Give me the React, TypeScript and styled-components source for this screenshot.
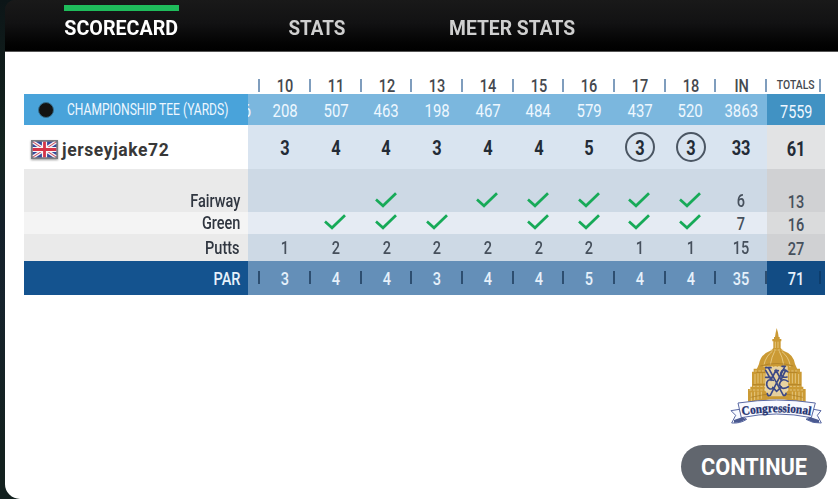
import React from "react"
import styled, { createGlobalStyle } from "styled-components"

const GlobalStyle = createGlobalStyle`
  * {
    box-sizing: border-box;
  }

  body {
    margin: 0;
    overflow: hidden;
    background: #14211f;
    font-family: Roboto, "Liberation Sans", sans-serif;
  }
`

const Screen = styled.div`
  height: 499px;
  padding-left: 5px;
  background: linear-gradient(#0c1517, #14241f 30%, #14202a 45%, #16232c 60%, #13211f 90%);
`

const Panel = styled.main`
  height: 499px;
  background: linear-gradient(#191919 51px, #fff 51px);
  border-radius: 10px 0 0 15px;
  overflow: hidden;
`

const Tabs = styled.nav`
  display: flex;
  height: 52px;
  padding: 5px 0 0 59px;
  background: linear-gradient(#191919, #121213 45%, #030303 85%, #000);
  border-bottom: 1px solid #555;
`

const Tab = styled.a<{ $active?: boolean; $width: number; $gap: number }>`
  width: ${(props) => props.$width}px;
  margin-right: ${(props) => props.$gap}px;
  height: 46px;
  border-top: 6px solid ${(props) => (props.$active ? "#1fbc5b" : "transparent")};
  color: ${(props) => (props.$active ? "#fff" : "#cfcfcf")};
  display: flex;
  justify-content: center;
  font-size: 20.5px;
  font-weight: 700;
  line-height: 34px;
  white-space: nowrap;
`

const Text = styled.span<{
  $squeeze?: number
  $nudge?: number
  $origin?: string
  $size?: number
}>`
  display: inline-block;
  flex: none;
  white-space: nowrap;
  ${(props) => props.$size && `font-size: ${props.$size}px;`}
  transform: translateY(${(props) => props.$nudge ?? 0}px)
    scaleX(${(props) => props.$squeeze ?? 0.83});
  transform-origin: ${(props) => props.$origin ?? "center"};
`

const Table = styled.section`
  width: 801px;
  margin: 26px 0 0 19px;
`

interface Tone {
  height: number
  label: string
  holes: string
  total: string
  color: string
  labelColor?: string
  size?: number
  weight?: number
  top?: number
}

const Row = styled.div<{ $tone: Tone }>`
  display: grid;
  grid-template-columns: 224px 519px 58px;
  grid-template-rows: 100%;
  height: ${(props) => props.$tone.height}px;
  color: ${(props) => props.$tone.color};
  font-size: ${(props) => props.$tone.size ?? 17.5}px;
  font-weight: ${(props) => props.$tone.weight ?? 500};
  line-height: 16px;

  > * {
    padding-top: ${(props) => props.$tone.top ?? 0}px;
  }
`

const Label = styled.div<{ $tone: Tone; $left?: boolean }>`
  display: flex;
  align-items: center;
  justify-content: ${(props) => (props.$left ? "flex-start" : "flex-end")};
  padding-right: 8px;
  background: ${(props) => props.$tone.label};
  color: ${(props) => props.$tone.labelColor ?? props.$tone.color};
`

const Holes = styled.div<{ $tone: Tone }>`
  display: grid;
  grid-template-columns: 10.3px repeat(10, 50.7px) 1.7px;
  background: ${(props) => props.$tone.holes};
`

const Total = styled.div<{ $tone: Tone }>`
  display: flex;
  align-items: center;
  justify-content: center;
  background: ${(props) => props.$tone.total};
`

const Cell = styled.div`
  position: relative;
  display: flex;
  align-items: center;
  justify-content: center;
  padding-left: 3px;
`

const EndCell = styled.div`
  position: relative;
`

const Tick = styled.i<{ $color: string; $right?: boolean }>`
  position: absolute;
  ${(props) => (props.$right ? "right: 4px" : "left: 0")};
  top: calc(50% - 7px);
  width: 2px;
  height: 13px;
  background: ${(props) => props.$color};
`

const TotalInner = styled.div`
  position: relative;
  width: 100%;
  height: 100%;
  display: flex;
  align-items: center;
  justify-content: center;
`

const Clipped = styled.div`
  display: flex;
  align-items: center;
  justify-content: flex-end;
  padding-right: 7px;
  overflow: hidden;
`

const Birdie = styled.span`
  display: flex;
  flex: none;
  align-items: center;
  justify-content: center;
  width: 30px;
  height: 30px;
  border: 2px solid #4b5663;
  border-radius: 50%;
`

const Dot = styled.span`
  flex: none;
  width: 16px;
  height: 16px;
  margin: 0 13px 0 14px;
  border: 1px solid #356d8c;
  border-radius: 50%;
  background: #131313;
`

const FlagIcon = styled.svg`
  width: 27px;
  height: 19px;
  margin: 4px 4px 0 7px;
  flex: none;
  filter: drop-shadow(0 1px 1px rgba(0, 0, 0, 0.4));
`

const Player = styled.span`
  color: #383838;
  font-size: 17.5px;
  font-weight: 700;
  letter-spacing: 0.6px;
  margin-top: 5px;
`

const Footer = styled.footer`
  display: flex;
  flex-direction: column;
  align-items: flex-end;
  padding-right: 11px;
`

const ClubLogo = styled.svg`
  width: 96px;
  height: 100px;
  margin: 31px 3px 19px 0;
`

const Continue = styled.button`
  width: 146px;
  height: 43px;
  padding: 0;
  border: 0;
  border-radius: 22px;
  background: #61666e;
  color: #fff;
  font-family: inherit;
  font-size: 23px;
  font-weight: 700;
`

const tones: Record<string, Tone> = {
  head: { height: 16, label: "#fff", holes: "#fff", total: "#fff", color: "#45494f" },
  yards: {
    height: 31,
    label: "#49a3da",
    holes: "#7bb7de",
    total: "#4192c3",
    color: "#eef7ff",
    size: 18,
    weight: 400,
  },
  score: {
    height: 44,
    label: "#fff",
    holes: "#d9e4f0",
    total: "#e2e3e4",
    color: "#232b36",
    size: 21,
    weight: 700,
  },
  fairway: {
    height: 43,
    label: "#eaeaea",
    holes: "#cdd9e5",
    total: "#d0d1d3",
    color: "#46505c",
    labelColor: "#303640",
    top: 21,
  },
  green: {
    height: 22,
    label: "#f4f4f4",
    holes: "#e5ebf3",
    total: "#dadbdc",
    color: "#46505c",
    labelColor: "#303640",
  },
  putts: {
    height: 27,
    label: "#eaeaea",
    holes: "#cdd9e5",
    total: "#d0d1d3",
    color: "#46505c",
    labelColor: "#303640",
  },
  par: {
    height: 34,
    label: "#14538f",
    holes: "#648fb8",
    total: "#124c84",
    color: "#e6f1fb",
  },
}

const columns = ["10", "11", "12", "13", "14", "15", "16", "17", "18", "IN"]
const yards = ["208", "507", "463", "198", "467", "484", "579", "437", "520", "3863"]
const scores = ["3", "4", "4", "3", "4", "4", "5", "(3)", "(3)", "33"]
const fairways = ["", "", "x", "", "x", "x", "x", "x", "x", "6"]
const greens = ["", "x", "x", "x", "", "x", "x", "x", "x", "7"]
const putts = ["1", "2", "2", "2", "2", "2", "2", "1", "1", "15"]
const pars = ["3", "4", "4", "3", "4", "4", "5", "4", "4", "35"]

const CheckIcon = styled.svg`
  width: 24px;
  height: 17px;
  margin: -3px 1px 0 0;
`

const Check = () => (
  <CheckIcon viewBox="0 0 24 17">
    <path d="M2 8.6 L9 14.8 L22 2.2" fill="none" stroke="#17aa58" strokeWidth="2.7" />
  </CheckIcon>
)

interface RowProps {
  tone: Tone
  label?: React.ReactNode
  left?: boolean
  values: string[]
  total: string
  tick?: string
  squeeze?: number
  totalSqueeze?: number
  nudge?: number
  clipped?: string
}

const ScoreRow = ({
  tone,
  label,
  left,
  values,
  total,
  tick,
  squeeze,
  totalSqueeze,
  nudge = 0,
  clipped,
}: RowProps) => {
  const isHead = tone === tones.head

  return (
    <Row $tone={tone}>
      <Label $tone={tone} $left={left}>
        {label}
      </Label>
      <Holes $tone={tone}>
        <Clipped>
          {clipped && (
            <Text $nudge={nudge} $origin="right">
              {clipped}
            </Text>
          )}
        </Clipped>
        {values.map((value, i) => (
          <Cell key={i}>
            {tick && <Tick $color={tick} />}
            {value === "x" ? (
              <Check />
            ) : value === "(3)" ? (
              <Birdie>
                <Text $squeeze={0.78} $nudge={0.5}>
                  3
                </Text>
              </Birdie>
            ) : (
              <Text $squeeze={squeeze} $nudge={nudge}>
                {value}
              </Text>
            )}
          </Cell>
        ))}
        <EndCell>{tick && <Tick $color={tick} />}</EndCell>
      </Holes>
      <Total $tone={tone}>
        <TotalInner>
          <Text
            $squeeze={totalSqueeze ?? squeeze}
            $nudge={isHead ? -1 : nudge + 0.5}
            $size={isHead ? 12.5 : undefined}
          >
            {total}
          </Text>
          {tick && <Tick $color={isHead ? tick : "#0d3d6c"} $right />}
        </TotalInner>
      </Total>
    </Row>
  )
}

const UnionJack = () => (
  <FlagIcon viewBox="0 0 27 19">
    <rect width="27" height="19" fill="#7b7b80" />
    <rect x="1.5" y="1.5" width="24" height="16" fill="#34499a" />
    <path d="M2 2 L25 17 M25 2 L2 17" stroke="#f1eef3" strokeWidth="3.6" />
    <path d="M2 2 L25 17 M25 2 L2 17" stroke="#cf4858" strokeWidth="1" />
    <path d="M13.5 1.5 V17.5 M1.5 9.5 H25.5" stroke="#f8f5f6" strokeWidth="5.2" />
    <path d="M13.5 1.5 V17.5 M1.5 9.5 H25.5" stroke="#d43448" strokeWidth="2.8" />
    <rect x="0.75" y="0.75" width="25.5" height="17.5" fill="none" stroke="#7b7b80" strokeWidth="1.5" />
  </FlagIcon>
)

const CapitolLogo = () => (
  <ClubLogo viewBox="24 18 288 300">
    {/* dome */}
    <g fill="#cb9a34">
      <path d="M170 24 L174 38 L176 51 H165 L167 38 Z" />
      <path d="M162 51 H179 V57 H184 V64 H182 V84 L191 94 H151 L160 84 V64 H157 V57 H162 Z" />
      <path d="M151 92 H190 Q220 102 225 132 L233 150 H109 L117 132 Q122 102 151 92 Z" />
      <path d="M101 146 H240 V155 H245 V200 H250 V207 H257 V252 Q171 224 84 252 V207 H91 V200 H96 V155 H101 Z" />
    </g>
    <g fill="none" stroke="#f3dea4" strokeWidth="2">
      <path d="M166 65 V84 M174 65 V84 M157 94 Q138 108 132 134 M164 94 Q155 110 151 134 M178 94 Q187 110 191 134 M186 95 Q205 110 210 134" />
      <path d="M104 153 H238 M99 199 H243 M88 210 H252 M151 90 H190 M130 140 H212" strokeDasharray="7 4" />
      <path d="M105 162 V192 M114 160 V190 M123 160 V190 M132 160 V190 M208 160 V190 M217 160 V190 M226 160 V190 M236 162 V192" />
      <path d="M94 217 V243 M104 215 V240 M114 215 V238 M124 215 V236 M217 215 V237 M227 215 V238 M237 215 V242 M247 217 V243" />
    </g>
    <path
      d="M121 138 Q171 123 220 138 M109 157 H232 M92 232 Q171 211 249 232 M98 194 H136 M206 194 H243"
      fill="none"
      stroke="#a87a24"
      strokeWidth="2"
    />
    {/* crossed clubs and monogram */}
    <path d="M138 140 H203 L205 210 L190 229 H147 L134 210 Z" fill="#f0e4c4" opacity="0.75" />
    <g fill="none" stroke="#3c4987" strokeLinecap="round" strokeWidth="5">
      <path d="M145 143 L190 226 Q198 227 198 220 M193 143 L151 226 Q143 229 142 221" />
      <path d="M137 143 H153 M186 139 H196 M137 172 H153 M137 151 L153 179 L168 151 L183 179 L197 151 M165 152 H175" />
      <path d="M203 155 Q188 142 182 160 Q184 175 201 171 M160 181 Q139 174 140 195 Q145 213 163 204 M204 184 Q184 171 178 193 Q184 213 205 200" />
      <path d="M158 202 L170 214 L184 201" />
    </g>
    {/* ribbon */}
    <g fill="#f8faff" stroke="#5a69a3" strokeWidth="3" strokeLinejoin="round">
      <path d="M58 268 L33 272 L47 286 L35 309 Q61 311 80 298 L66 287 Z" />
      <path d="M281 268 L303 272 L292 286 L304 309 Q278 311 258 298 L273 287 Z" />
      <path d="M54 249 Q170 231 286 249 L274 293 Q170 271 64 293 Z" />
    </g>
    <path
      d="M42 300 L66 292 L79 298 Q61 309 42 308 Z M297 300 L272 292 L259 298 Q277 309 297 308 Z"
      fill="#4a5990"
    />
    <path id="ribbon-line" d="M67 286 Q170 267 273 286" fill="none" />
    <text
      fill="#24336f"
      stroke="#24336f"
      strokeWidth="1"
      fontFamily="Liberation Serif, serif"
      fontWeight="700"
      fontSize="37"
    >
      <textPath href="#ribbon-line" textLength="206" lengthAdjust="spacingAndGlyphs">
        Congressional
      </textPath>
    </text>
  </ClubLogo>
)

const App = () => {
  return (
    <>
      <GlobalStyle />
      <Screen>
        <Panel>
          <Tabs>
            <Tab $active $width={115} $gap={109}>
              <Text $squeeze={0.96}>SCORECARD</Text>
            </Tab>
            <Tab $width={58} $gap={103}>
              <Text $squeeze={0.92}>STATS</Text>
            </Tab>
            <Tab $width={127} $gap={0}>
              <Text $squeeze={0.94}>METER STATS</Text>
            </Tab>
          </Tabs>
          <Table>
            <ScoreRow
              tone={tones.head}
              values={columns}
              total="TOTALS"
              tick="#7f9dbd"
              nudge={-0.5}
            />
            <ScoreRow
              tone={tones.yards}
              left
              label={
                <>
                  <Dot />
                  <Text $squeeze={0.73} $nudge={-0.5} $origin="left" $size={16.5}>
                    CHAMPIONSHIP TEE (YARDS)
                  </Text>
                </>
              }
              values={yards}
              total="7559"
              nudge={1}
              totalSqueeze={0.8}
              clipped="6"
            />
            <ScoreRow
              tone={tones.score}
              left
              label={
                <>
                  <UnionJack />
                  <Player>jerseyjake72</Player>
                </>
              }
              values={scores}
              total="61"
              squeeze={0.78}
              nudge={1}
            />
            <ScoreRow
              tone={tones.fairway}
              label={<Text $origin="right">Fairway</Text>}
              values={fairways}
              total="13"
            />
            <ScoreRow
              tone={tones.green}
              label={<Text $origin="right">Green</Text>}
              values={greens}
              total="16"
              nudge={1}
            />
            <ScoreRow
              tone={tones.putts}
              label={<Text $origin="right">Putts</Text>}
              values={putts}
              total="27"
            />
            <ScoreRow
              tone={tones.par}
              label={
                <Text $origin="right" $nudge={1}>
                  PAR
                </Text>
              }
              values={pars}
              total="71"
              tick="#2d4e70"
              nudge={0.5}
            />
          </Table>
          <Footer>
            <CapitolLogo />
            <Continue>
              <Text $squeeze={0.945} $nudge={0.5}>
                CONTINUE
              </Text>
            </Continue>
          </Footer>
        </Panel>
      </Screen>
    </>
  )
}

export default App
